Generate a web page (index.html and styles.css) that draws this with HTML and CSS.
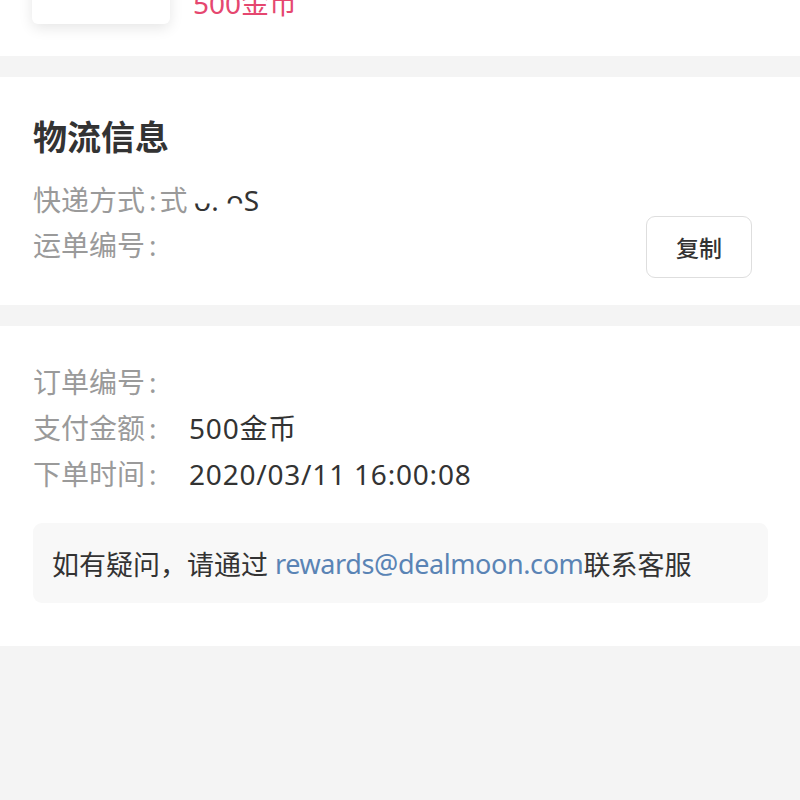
FILE: index.html
```html
<!DOCTYPE html>
<html lang="zh">
<head>
<meta charset="utf-8">
<link rel="stylesheet" href="styles.css">
</head>
<body>
<div class="page">
  <section class="section top">
    <div class="product">
      <div class="thumb"></div>
      <div class="price">500金币</div>
    </div>
  </section>
  <section class="section logistics">
    <h2 class="title">物流信息</h2>
    <div class="ship-row">
      <div class="lines">
        <div class="line">快递方式<span class="c">:</span>式<span class="masked">ᴗ. ᴖS</span></div>
        <div class="line">运单编号<span class="c">:</span></div>
      </div>
      <button class="copy">复制</button>
    </div>
  </section>
  <section class="section order">
    <div class="kv"><span class="k">订单编号<span class="c">:</span></span><span class="v"></span></div>
    <div class="kv"><span class="k">支付金额<span class="c">:</span></span><span class="v">500金币</span></div>
    <div class="kv"><span class="k">下单时间<span class="c">:</span></span><span class="v">2020/03/11 16:00:08</span></div>
    <div class="notice">如有疑问，请通过 <span class="mail">rewards@dealmoon.com</span>联系客服</div>
  </section>
</div>
</body>
</html>
```

FILE: styles.css
```css
* { box-sizing: border-box; }
html, body {
  margin: 0;
  padding: 0;
  background: #f4f4f4;
}
body {
  font-family: "Noto Sans", "Noto Sans CJK SC", sans-serif;
  color: #333;
}
.page {
  display: flex;
  flex-direction: column;
  gap: 21px;
}
.section {
  background: #fff;
}
.top {
  height: 56px;
  overflow: hidden;
}
.product {
  display: flex;
  align-items: flex-end;
  gap: 23px;
  margin-top: -60px;
  padding-left: 32px;
}
.thumb {
  width: 138px;
  height: 84px;
  background: #fff;
  border-radius: 6px;
  box-shadow: 0 4px 14px rgba(0, 0, 0, 0.1);
}
.price {
  font-size: 28px;
  line-height: 40px;
  color: #e5476f;
  margin-bottom: 1px;
}
.logistics {
  padding: 33px 48px 27px 33px;
}
.title {
  margin: 0;
  font-size: 34px;
  line-height: 54px;
  font-weight: 700;
  color: #333;
}
.ship-row {
  display: flex;
  align-items: flex-start;
  justify-content: space-between;
  margin-top: 14px;
}
.line {
  font-size: 28px;
  line-height: 45px;
  color: #9a9a9a;
}
.c {
  margin: 0 3px 0 4px;
}
.masked {
  color: #333;
  margin-left: 6px;
}
.copy {
  width: 106px;
  height: 62px;
  margin-top: 38px;
  border: 1.5px solid #dedede;
  border-radius: 9px;
  background: #fff;
  font-family: "Noto Sans CJK SC", sans-serif;
  font-size: 23px;
  font-weight: 500;
  color: #333;
  padding: 0;
}
.order {
  padding: 33px 32px 43px 33px;
}
.kv {
  display: flex;
  font-size: 28px;
  line-height: 46px;
}
.k {
  width: 156px;
  color: #9a9a9a;
}
.v {
  color: #333;
  letter-spacing: 0.8px;
}
.notice {
  margin-top: 26px;
  background: #f8f8f8;
  border-radius: 9px;
  padding: 0 19px;
  height: 80px;
  display: flex;
  align-items: center;
  font-size: 27px;
  color: #333;
  white-space: pre;
}
.mail {
  color: #5a84b5;
  letter-spacing: -0.4px;
}
```
